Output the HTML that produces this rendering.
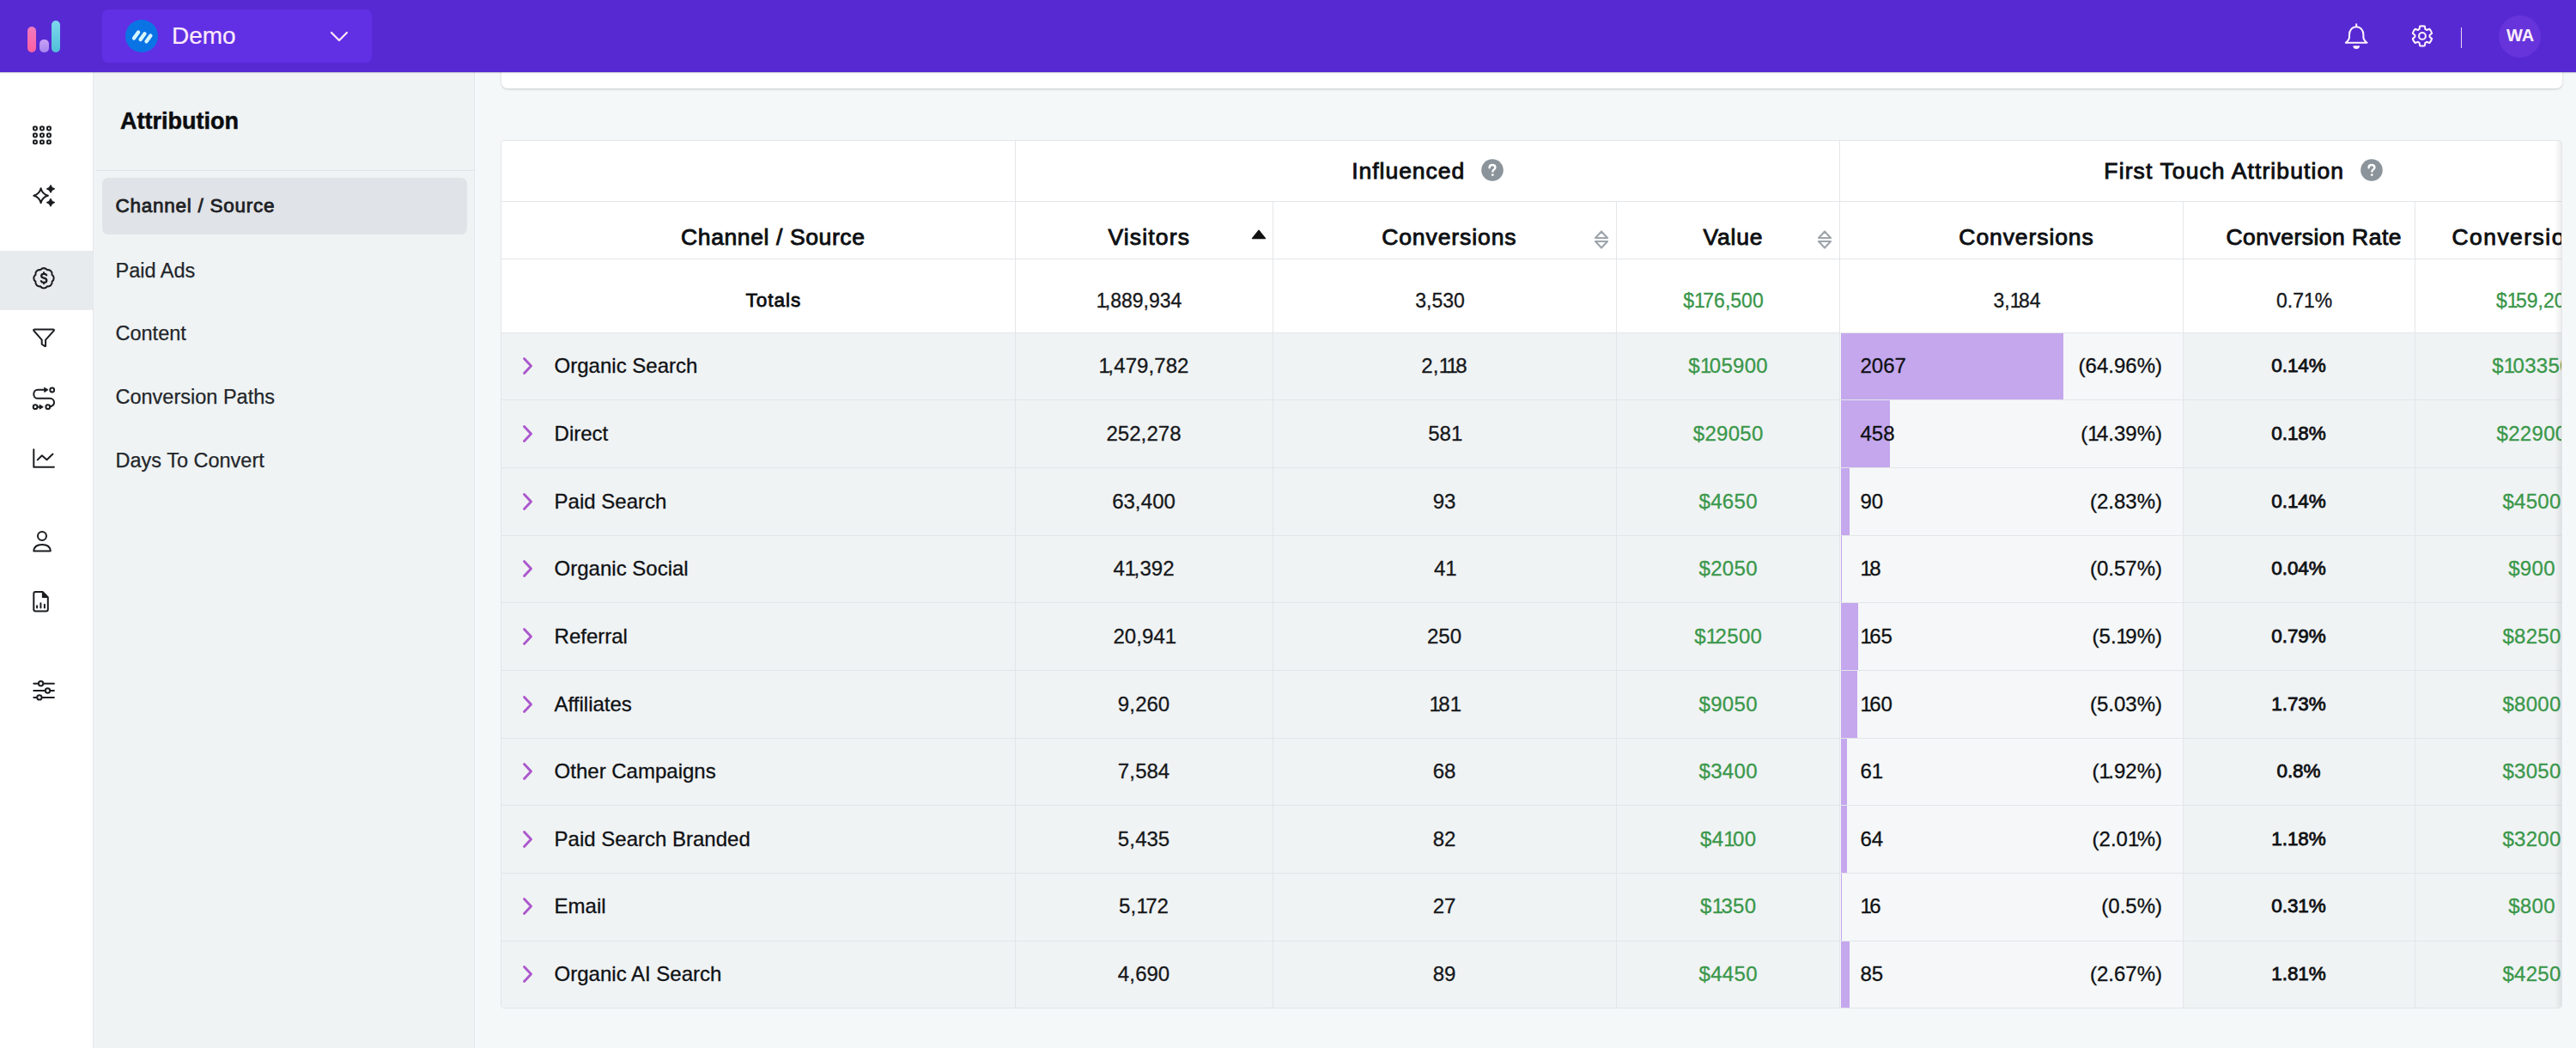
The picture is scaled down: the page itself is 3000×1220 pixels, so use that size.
<!DOCTYPE html><html><head><meta charset="utf-8"><title>Attribution</title><style>
*{box-sizing:border-box;margin:0;padding:0}
html,body{width:3000px;height:1220px;overflow:hidden}
body{position:relative;font-family:"Liberation Sans",sans-serif;color:#101214;background:#f5f8f9}
.a{position:absolute}
.t{position:absolute;white-space:nowrap;line-height:1}
.rg{-webkit-text-stroke:0.3px currentColor}
#hdr{left:0;top:0;width:3000px;height:84px;background:#5729d3;z-index:5;box-shadow:0 1px 1px rgba(30,10,60,.18)}
#side{left:0;top:84px;width:109px;height:1136px;background:#fff;border-right:1px solid #e6e8eb}
#panel{left:109px;top:84px;width:444px;height:1136px;background:#eff3f4;border-right:1px solid #e4e7ea}
#topcard{left:584px;top:40px;width:2400px;height:63px;background:#fff;border-radius:7px;box-shadow:0 1px 3px rgba(0,0,0,.12),0 1px 2px rgba(0,0,0,.08)}
#tcard{left:583px;top:163px;width:2401px;height:1011px;background:#fff;border:1px solid #e3e6e9;border-radius:4px;overflow:hidden}
.hl{border-top:1px solid #e3e6e9}
.vl{border-left:1px solid #e3e6e9}
.th{font-weight:bold;font-size:26px}
.num{font-size:23px}
.g{color:#3b984b}
</style></head><body>
<div id="hdr" class="a">
<div class="a" style="left:32px;top:31px;width:10px;height:30px;border-radius:5px;background:linear-gradient(#f07ac0,#ff5fa0)"></div>
<div class="a" style="left:46px;top:46px;width:10.5px;height:15px;border-radius:5px;background:linear-gradient(#c9a0f5,#a586ef)"></div>
<div class="a" style="left:60px;top:23.5px;width:10px;height:37.5px;border-radius:5px;background:linear-gradient(#7fd6ee,#4fc0d8)"></div>
<div class="a" style="left:119px;top:11px;width:314px;height:62px;border-radius:7px;background:#6130e4"></div>
<div class="a" style="left:146px;top:22.5px;width:38px;height:38px;border-radius:50%;background:#0b74e5"></div>
<svg class="a" style="left:146px;top:22.5px" width="38" height="38" viewBox="0 0 38 38"><g stroke="#d6f5ff" stroke-width="4.3" stroke-linecap="round"><line x1="10" y1="21.5" x2="15.1" y2="14.5"/><line x1="17.6" y1="23.1" x2="22.5" y2="16.3"/><line x1="24.5" y1="25.2" x2="29.4" y2="18.4"/></g></svg>
<div class="t" style="left:200px;top:27.5px;font-size:28px;color:#fdeafa;-webkit-text-stroke:0.2px #fdeafa">Demo</div>
<svg class="a" style="left:384px;top:35px" width="22" height="14" viewBox="0 0 22 14"><polyline points="2,3 11,12 20,3" fill="none" stroke="#fde8f8" stroke-width="2.2" stroke-linecap="round" stroke-linejoin="round"/></svg>
<svg class="a" style="left:0;top:0" width="3000" height="84" viewBox="0 0 3000 84"><path d="M2744.2 28.3 V31.3 M2744.2 31.3 C2739.3 31.3 2736 35.2 2736 40.6 V43.2 C2736 45.6 2734 47.9 2731.9 49.8 H2756.5 C2754.4 47.9 2752.4 45.6 2752.4 43.2 V40.6 C2752.4 35.2 2749.1 31.3 2744.2 31.3Z" fill="none" stroke="#fdf0fb" stroke-width="2.1" stroke-linecap="round" stroke-linejoin="round"/><path d="M2740.3 53.2 H2748.1 A3.9 3.7 0 0 1 2740.3 53.2Z" fill="#fdf0fb"/></svg>
<svg class="a" style="left:0;top:0" width="3000" height="84" viewBox="0 0 3000 84"><path d="M2817.50 34.04 L2818.19 30.64 A11.60 11.60 0 0 1 2823.81 30.64 L2824.50 34.04 A8.60 8.60 0 0 1 2826.05 34.94 L2829.34 33.84 A11.60 11.60 0 0 1 2832.15 38.70 L2829.55 41.00 A8.60 8.60 0 0 1 2829.55 42.80 L2832.15 45.10 A11.60 11.60 0 0 1 2829.34 49.96 L2826.05 48.86 A8.60 8.60 0 0 1 2824.50 49.76 L2823.81 53.16 A11.60 11.60 0 0 1 2818.19 53.16 L2817.50 49.76 A8.60 8.60 0 0 1 2815.95 48.86 L2812.66 49.96 A11.60 11.60 0 0 1 2809.85 45.10 L2812.45 42.80 A8.60 8.60 0 0 1 2812.45 41.00 L2809.85 38.70 A11.60 11.60 0 0 1 2812.66 33.84 L2815.95 34.94 A8.60 8.60 0 0 1 2817.50 34.04Z" fill="none" stroke="#fdf0fb" stroke-width="2.1" stroke-linejoin="round"/><circle cx="2821" cy="41.9" r="3.9" fill="none" stroke="#fdf0fb" stroke-width="2.1"/></svg>
<div class="a" style="left:2865.5px;top:32px;width:1.5px;height:24px;background:#e8d8f5"></div>
<div class="a" style="left:2909.7px;top:17.5px;width:49px;height:49px;border-radius:50%;background:#6634da"></div>
<div class="t" style="left:2919px;top:31px;font-size:20px;font-weight:bold;color:#fdeefa;width:32px;text-align:center">WA</div>
</div>
<div id="side" class="a">
<div class="a" style="left:0;top:208px;width:108px;height:69px;background:#e8ebee"></div>
</div>
<svg class="a" style="left:0;top:0;z-index:2" width="109" height="1220" viewBox="0 0 109 1220"><rect x="39.0" y="147.5" width="3.9" height="3.9" rx="1.1" fill="none" stroke="#1b1d20" stroke-width="2" stroke-linecap="round" stroke-linejoin="round"/><rect x="39.0" y="155.5" width="3.9" height="3.9" rx="1.1" fill="none" stroke="#1b1d20" stroke-width="2" stroke-linecap="round" stroke-linejoin="round"/><rect x="39.0" y="163.4" width="3.9" height="3.9" rx="1.1" fill="none" stroke="#1b1d20" stroke-width="2" stroke-linecap="round" stroke-linejoin="round"/><rect x="47.0" y="147.5" width="3.9" height="3.9" rx="1.1" fill="none" stroke="#1b1d20" stroke-width="2" stroke-linecap="round" stroke-linejoin="round"/><rect x="47.0" y="155.5" width="3.9" height="3.9" rx="1.1" fill="none" stroke="#1b1d20" stroke-width="2" stroke-linecap="round" stroke-linejoin="round"/><rect x="47.0" y="163.4" width="3.9" height="3.9" rx="1.1" fill="none" stroke="#1b1d20" stroke-width="2" stroke-linecap="round" stroke-linejoin="round"/><rect x="55.0" y="147.5" width="3.9" height="3.9" rx="1.1" fill="none" stroke="#1b1d20" stroke-width="2" stroke-linecap="round" stroke-linejoin="round"/><rect x="55.0" y="155.5" width="3.9" height="3.9" rx="1.1" fill="none" stroke="#1b1d20" stroke-width="2" stroke-linecap="round" stroke-linejoin="round"/><rect x="55.0" y="163.4" width="3.9" height="3.9" rx="1.1" fill="none" stroke="#1b1d20" stroke-width="2" stroke-linecap="round" stroke-linejoin="round"/><path d="M47.6 219.2 Q49.3 226 55.9 227.7 Q49.3 229.4 47.6 236.2 Q45.9 229.4 39.3 227.7 Q45.9 226 47.6 219.2Z" fill="none" stroke="#1b1d20" stroke-width="2" stroke-linecap="round" stroke-linejoin="round"/><path d="M59 215.6 Q59.9 219.0 63.4 219.9 Q59.9 220.8 59 224.2 Q58.1 220.8 54.6 219.9 Q58.1 219.0 59 215.6Z" fill="#1b1d20" stroke="#1b1d20" stroke-width="1.2" stroke-linejoin="round"/><path d="M59 231.4 Q59.9 234.8 63.4 235.7 Q59.9 236.6 59 240.0 Q58.1 236.6 54.6 235.7 Q58.1 234.8 59 231.4Z" fill="#1b1d20" stroke="#1b1d20" stroke-width="1.2" stroke-linejoin="round"/><g transform="translate(51 323.8) scale(1.17) translate(-12 -12)"><path d="M3.85 8.62a4 4 0 0 1 4.78-4.77 4 4 0 0 1 6.74 0 4 4 0 0 1 4.78 4.78 4 4 0 0 1 0 6.74 4 4 0 0 1-4.77 4.78 4 4 0 0 1-6.75 0 4 4 0 0 1-4.78-4.77 4 4 0 0 1 0-6.76Z" fill="none" stroke="#1b1d20" stroke-width="1.75" stroke-linejoin="round"/></g><path d="M54.2 320.3 C53.7 319.2 52.6 318.9 51.2 318.9 C49.4 318.9 48.2 319.9 48.2 321.2 C48.2 322.7 49.6 323.3 51.2 323.7 C52.9 324.1 54.3 324.8 54.3 326.4 C54.3 327.8 53 328.8 51.1 328.8 C49.6 328.8 48.4 328.3 47.9 327.2 M51.1 317.4 V318.9 M51.1 328.8 V330.2" fill="none" stroke="#1b1d20" stroke-width="2.3" stroke-linecap="round" stroke-linejoin="round"/><path d="M40.3 383.5 H61.8 Q63.6 383.5 62.6 385.1 L53.1 395.7 V402.5 Q53.1 403.6 52.1 403 L48.7 400.6 V395.7 L39.5 385.1 Q38.5 383.5 40.3 383.5Z" fill="none" stroke="#1b1d20" stroke-width="2" stroke-linecap="round" stroke-linejoin="round"/><circle cx="60.7" cy="454" r="2.4" fill="none" stroke="#1b1d20" stroke-width="2" stroke-linecap="round" stroke-linejoin="round"/><circle cx="41.1" cy="473.7" r="2.4" fill="none" stroke="#1b1d20" stroke-width="2" stroke-linecap="round" stroke-linejoin="round"/><circle cx="55.8" cy="473.7" r="2.4" fill="none" stroke="#1b1d20" stroke-width="2" stroke-linecap="round" stroke-linejoin="round"/><path d="M53 453.8 H44 C41.2 453.8 39.3 456 39.3 458.9 C39.3 461.8 41.3 463.8 44 463.8 H58.2 C61 463.8 63 466 63 468.6 C63 471 61.2 472.8 58.3 473.5" fill="none" stroke="#1b1d20" stroke-width="2" stroke-linecap="round" stroke-linejoin="round"/><path d="M51.8 451.4 L55.6 453.8 L51.8 456.2Z" fill="#1b1d20" stroke="#1b1d20" stroke-width="1.2" stroke-linejoin="round"/><path d="M44.5 473.7 H47" fill="none" stroke="#1b1d20" stroke-width="2" stroke-linecap="round" stroke-linejoin="round"/><path d="M46.3 471.4 L50 473.7 L46.3 476Z" fill="#1b1d20" stroke="#1b1d20" stroke-width="1.1" stroke-linejoin="round"/><path d="M39.3 523.3 V543.8 H62.9 M43.7 535.4 L48.9 530.2 L54.5 535.2 L61.5 528.6" fill="none" stroke="#1b1d20" stroke-width="2" stroke-linecap="round" stroke-linejoin="round"/><circle cx="49" cy="624" r="5" fill="none" stroke="#1b1d20" stroke-width="2" stroke-linecap="round" stroke-linejoin="round"/><path d="M39.3 641.4 C39.6 636.3 43.6 633.9 49 633.9 C54.4 633.9 58.5 636.3 58.8 641.4Z" fill="none" stroke="#1b1d20" stroke-width="2" stroke-linecap="round" stroke-linejoin="round"/><path d="M41.3 688.9 H49.6 L55.8 695.2 V709.5 Q55.8 711.5 53.8 711.5 H41.3 Q39.3 711.5 39.3 709.5 V690.9 Q39.3 688.9 41.3 688.9Z" fill="none" stroke="#1b1d20" stroke-width="2" stroke-linecap="round" stroke-linejoin="round"/><path d="M49.6 689.5 V695.2 H55.3Z" fill="#1b1d20" stroke="#1b1d20" stroke-width="1.5" stroke-linejoin="round"/><path d="M43.1 705.3 V707.6 M47.4 702.3 V707.6 M51.9 703.7 V707.6" fill="none" stroke="#1b1d20" stroke-width="2" stroke-linecap="round" stroke-linejoin="round"/><path d="M39.3 795.8 H44 M51.2 795.8 H62.9 M39.3 804 H51.9 M59.1 804 H62.9 M39.3 811.9 H42.3 M49.5 811.9 H62.9" fill="none" stroke="#1b1d20" stroke-width="2" stroke-linecap="round" stroke-linejoin="round"/><circle cx="47.6" cy="795.8" r="2.7" fill="none" stroke="#1b1d20" stroke-width="2" stroke-linecap="round" stroke-linejoin="round"/><circle cx="55.5" cy="804" r="2.7" fill="none" stroke="#1b1d20" stroke-width="2" stroke-linecap="round" stroke-linejoin="round"/><circle cx="45.9" cy="811.9" r="2.7" fill="none" stroke="#1b1d20" stroke-width="2" stroke-linecap="round" stroke-linejoin="round"/></svg>
<div id="panel" class="a">
<div class="t" style="left:31px;top:44.3px;font-size:27px;font-weight:bold;color:#0c0d0f;-webkit-text-stroke:0.5px #0c0d0f">Attribution</div>
<div class="a" style="left:3px;top:113.5px;width:441px;height:1px;background:#e1e4e7"></div>
<div class="a" style="left:9.5px;top:123px;width:425px;height:65.5px;border-radius:7px;background:#e0e3e7"></div>
<div class="t" style="left:25.5px;top:145.3px;font-size:22.5px;color:#1d2024;-webkit-text-stroke:0.8px #1d2024;letter-spacing:0.75px">Channel / Source</div>
<div class="t" style="left:25.5px;top:219.5px;font-size:23.5px;color:#23262a;-webkit-text-stroke:0.25px #23262a">Paid Ads</div>
<div class="t" style="left:25.5px;top:293.4px;font-size:23.5px;color:#23262a;-webkit-text-stroke:0.25px #23262a">Content</div>
<div class="t" style="left:25.5px;top:367.3px;font-size:23.5px;color:#23262a;-webkit-text-stroke:0.25px #23262a">Conversion Paths</div>
<div class="t" style="left:25.5px;top:441.20000000000005px;font-size:23.5px;color:#23262a;-webkit-text-stroke:0.25px #23262a">Days To Convert</div>
</div>
<div id="topcard" class="a"></div>
<div id="tcard" class="a">
<div class="a" style="left:0;top:223.00px;width:2400px;height:78.00px;background:#f0f3f4"></div>
<div class="a" style="left:1558px;top:223.00px;width:400px;height:78.00px;background:#f5f7f8"></div>
<div class="a" style="left:1560px;top:223.00px;width:258.84px;height:78.00px;background:#c4a7ed"></div>
<div class="a" style="left:0;top:301.00px;width:2400px;height:79.00px;background:#f0f3f4"></div>
<div class="a" style="left:1558px;top:301.00px;width:400px;height:79.00px;background:#f5f7f8"></div>
<div class="a" style="left:1560px;top:301.00px;width:56.56px;height:79.00px;background:#c4a7ed"></div>
<div class="a" style="left:0;top:380.00px;width:2400px;height:79.00px;background:#f0f3f4"></div>
<div class="a" style="left:1558px;top:380.00px;width:400px;height:79.00px;background:#f5f7f8"></div>
<div class="a" style="left:1560px;top:380.00px;width:10.32px;height:79.00px;background:#c4a7ed"></div>
<div class="a" style="left:0;top:459.00px;width:2400px;height:78.00px;background:#f0f3f4"></div>
<div class="a" style="left:1558px;top:459.00px;width:400px;height:78.00px;background:#f5f7f8"></div>
<div class="a" style="left:1560px;top:459.00px;width:1.28px;height:78.00px;background:#c4a7ed"></div>
<div class="a" style="left:0;top:537.00px;width:2400px;height:79.00px;background:#f0f3f4"></div>
<div class="a" style="left:1558px;top:537.00px;width:400px;height:79.00px;background:#f5f7f8"></div>
<div class="a" style="left:1560px;top:537.00px;width:19.76px;height:79.00px;background:#c4a7ed"></div>
<div class="a" style="left:0;top:616.00px;width:2400px;height:79.00px;background:#f0f3f4"></div>
<div class="a" style="left:1558px;top:616.00px;width:400px;height:79.00px;background:#f5f7f8"></div>
<div class="a" style="left:1560px;top:616.00px;width:19.12px;height:79.00px;background:#c4a7ed"></div>
<div class="a" style="left:0;top:695.00px;width:2400px;height:78.00px;background:#f0f3f4"></div>
<div class="a" style="left:1558px;top:695.00px;width:400px;height:78.00px;background:#f5f7f8"></div>
<div class="a" style="left:1560px;top:695.00px;width:6.68px;height:78.00px;background:#c4a7ed"></div>
<div class="a" style="left:0;top:773.00px;width:2400px;height:79.00px;background:#f0f3f4"></div>
<div class="a" style="left:1558px;top:773.00px;width:400px;height:79.00px;background:#f5f7f8"></div>
<div class="a" style="left:1560px;top:773.00px;width:7.04px;height:79.00px;background:#c4a7ed"></div>
<div class="a" style="left:0;top:852.00px;width:2400px;height:78.50px;background:#f0f3f4"></div>
<div class="a" style="left:1558px;top:852.00px;width:400px;height:78.50px;background:#f5f7f8"></div>
<div class="a" style="left:1560px;top:852.00px;width:1.00px;height:78.50px;background:#c4a7ed"></div>
<div class="a" style="left:0;top:930.50px;width:2400px;height:78.50px;background:#f0f3f4"></div>
<div class="a" style="left:1558px;top:930.50px;width:400px;height:78.50px;background:#f5f7f8"></div>
<div class="a" style="left:1560px;top:930.50px;width:9.68px;height:78.50px;background:#c4a7ed"></div>
<div class="a" style="left:0;top:70.00px;width:2400px;height:1px;background:#e3e6e9"></div>
<div class="a" style="left:0;top:136.60px;width:2400px;height:1px;background:#e3e6e9"></div>
<div class="a" style="left:0;top:223.00px;width:2400px;height:1px;background:#e3e6e9"></div>
<div class="a" style="left:0;top:301.00px;width:2400px;height:1px;background:#e3e6e9"></div>
<div class="a" style="left:0;top:380.00px;width:2400px;height:1px;background:#e3e6e9"></div>
<div class="a" style="left:0;top:459.00px;width:2400px;height:1px;background:#e3e6e9"></div>
<div class="a" style="left:0;top:537.00px;width:2400px;height:1px;background:#e3e6e9"></div>
<div class="a" style="left:0;top:616.00px;width:2400px;height:1px;background:#e3e6e9"></div>
<div class="a" style="left:0;top:695.00px;width:2400px;height:1px;background:#e3e6e9"></div>
<div class="a" style="left:0;top:773.00px;width:2400px;height:1px;background:#e3e6e9"></div>
<div class="a" style="left:0;top:852.00px;width:2400px;height:1px;background:#e3e6e9"></div>
<div class="a" style="left:0;top:930.50px;width:2400px;height:1px;background:#e3e6e9"></div>
<div class="a" style="left:598px;top:0;width:1px;height:1010px;background:#e3e6e9"></div>
<div class="a" style="left:1558px;top:0;width:1px;height:1010px;background:#e3e6e9"></div>
<div class="a" style="left:898px;top:70px;width:1px;height:1010px;background:#e3e6e9"></div>
<div class="a" style="left:1298px;top:70px;width:1px;height:1010px;background:#e3e6e9"></div>
<div class="a" style="left:1958px;top:70px;width:1px;height:1010px;background:#e3e6e9"></div>
<div class="a" style="left:2228px;top:70px;width:1px;height:1010px;background:#e3e6e9"></div>
<div class="t" style="left:1056.2px;top:22.0px;width:0;font-size:26.5px;font-weight:normal;color:#0d0f12;-webkit-text-stroke:0.90px #0d0f12;letter-spacing:0.98px;"><span style="position:absolute;left:0;transform:translateX(-50%)">Influenced</span></div>
<div class="t" style="left:2006.3px;top:22.0px;width:0;font-size:26.5px;font-weight:normal;color:#0d0f12;-webkit-text-stroke:0.90px #0d0f12;letter-spacing:1.11px;"><span style="position:absolute;left:0;transform:translateX(-50%)">First Touch Attribution</span></div>
<svg class="a" style="left:1141px;top:21px" width="26" height="26" viewBox="0 0 26 26"><circle cx="13" cy="13" r="12.8" fill="#8b949b"/><path d="M9.6 10.2c0-1.9 1.5-3.2 3.4-3.2s3.4 1.2 3.4 3c0 2.3-3 2.5-3 4.6" fill="none" stroke="#fff" stroke-width="2.4" stroke-linecap="round"/><circle cx="13.3" cy="18.6" r="1.4" fill="#fff"/></svg>
<svg class="a" style="left:2164.5px;top:21px" width="26" height="26" viewBox="0 0 26 26"><circle cx="13" cy="13" r="12.8" fill="#8b949b"/><path d="M9.6 10.2c0-1.9 1.5-3.2 3.4-3.2s3.4 1.2 3.4 3c0 2.3-3 2.5-3 4.6" fill="none" stroke="#fff" stroke-width="2.4" stroke-linecap="round"/><circle cx="13.3" cy="18.6" r="1.4" fill="#fff"/></svg>
<div class="t" style="left:316.3px;top:99.0px;width:0;font-size:26.5px;font-weight:normal;color:#0d0f12;-webkit-text-stroke:0.90px #0d0f12;letter-spacing:0.61px;"><span style="position:absolute;left:0;transform:translateX(-50%)">Channel / Source</span></div>
<div class="t" style="left:754.3px;top:99.0px;width:0;font-size:26.5px;font-weight:normal;color:#0d0f12;-webkit-text-stroke:0.90px #0d0f12;letter-spacing:1.16px;"><span style="position:absolute;left:0;transform:translateX(-50%)">Visitors</span></div>
<div class="t" style="left:1103.8px;top:99.0px;width:0;font-size:26.5px;font-weight:normal;color:#0d0f12;-webkit-text-stroke:0.90px #0d0f12;letter-spacing:0.91px;"><span style="position:absolute;left:0;transform:translateX(-50%)">Conversions</span></div>
<div class="t" style="left:1434.4px;top:99.0px;width:0;font-size:26.5px;font-weight:normal;color:#0d0f12;-webkit-text-stroke:0.90px #0d0f12;letter-spacing:0.83px;"><span style="position:absolute;left:0;transform:translateX(-50%)">Value</span></div>
<div class="t" style="left:1776.0px;top:99.0px;width:0;font-size:26.5px;font-weight:normal;color:#0d0f12;-webkit-text-stroke:0.90px #0d0f12;letter-spacing:0.91px;"><span style="position:absolute;left:0;transform:translateX(-50%)">Conversions</span></div>
<div class="t" style="left:2110.7px;top:99.0px;width:0;font-size:26.5px;font-weight:normal;color:#0d0f12;-webkit-text-stroke:0.90px #0d0f12;letter-spacing:0.48px;"><span style="position:absolute;left:0;transform:translateX(-50%)">Conversion Rate</span></div>
<div class="t" style="left:2271.4px;top:99.0px;font-size:26.5px;font-weight:normal;color:#0d0f12;-webkit-text-stroke:0.90px #0d0f12;letter-spacing:1.46px;">Conversion Value</div>
<svg class="a" style="left:872.5px;top:103px" width="18" height="12" viewBox="0 0 18 12"><path d="M9 1.2 L16.6 10.6 H1.4z" fill="#111" stroke="#111" stroke-width="1.2" stroke-linejoin="round"/></svg>
<svg class="a" style="left:1272px;top:104px" width="18" height="22" viewBox="0 0 18 22"><path d="M9 1.5 L16 9 H2z M2 13 H16 L9 20.5z" fill="none" stroke="#9ea5ab" stroke-width="2.2" stroke-linejoin="round"/></svg>
<svg class="a" style="left:1532px;top:104px" width="18" height="22" viewBox="0 0 18 22"><path d="M9 1.5 L16 9 H2z M2 13 H16 L9 20.5z" fill="none" stroke="#9ea5ab" stroke-width="2.2" stroke-linejoin="round"/></svg>
<div class="t" style="left:316.8px;top:175.0px;width:0;font-size:22.5px;font-weight:normal;color:#0d0f12;-webkit-text-stroke:0.80px #0d0f12;letter-spacing:1.00px;"><span style="position:absolute;left:0;transform:translateX(-50%)">Totals</span></div>
<div class="t" style="left:742.5px;top:175.0px;width:0;font-size:23px;font-weight:normal;color:#16181b;-webkit-text-stroke:0.3px #16181b;"><span style="position:absolute;left:0;transform:translateX(-50%)"><span style="letter-spacing:-2.6px">1</span><span style="letter-spacing:0px">,</span>889<span style="letter-spacing:0px">,</span>934</span></div>
<div class="t" style="left:1093.0px;top:175.0px;width:0;font-size:23px;font-weight:normal;color:#16181b;-webkit-text-stroke:0.3px #16181b;"><span style="position:absolute;left:0;transform:translateX(-50%)">3<span style="letter-spacing:0px">,</span>530</span></div>
<div class="t" style="left:1423.0px;top:175.0px;width:0;font-size:23px;font-weight:normal;color:#3a964a;-webkit-text-stroke:0.3px #3a964a;"><span style="position:absolute;left:0;transform:translateX(-50%)">$<span style="letter-spacing:-2.6px">1</span>76<span style="letter-spacing:0px">,</span>500</span></div>
<div class="t" style="left:1765.0px;top:175.0px;width:0;font-size:23px;font-weight:normal;color:#16181b;-webkit-text-stroke:0.3px #16181b;"><span style="position:absolute;left:0;transform:translateX(-50%)">3<span style="letter-spacing:0px">,</span><span style="letter-spacing:-2.6px">1</span>84</span></div>
<div class="t" style="left:2099.6px;top:175.0px;width:0;font-size:23px;font-weight:normal;color:#16181b;-webkit-text-stroke:0.3px #16181b;"><span style="position:absolute;left:0;transform:translateX(-50%)">0.71%</span></div>
<div class="t" style="left:2369.7px;top:175.0px;width:0;font-size:23px;font-weight:normal;color:#3a964a;-webkit-text-stroke:0.3px #3a964a;"><span style="position:absolute;left:0;transform:translateX(-50%)">$<span style="letter-spacing:-2.6px">1</span>59<span style="letter-spacing:0px">,</span>200</span></div>
<svg class="a" style="left:22.5px;top:251.0px" width="16" height="22" viewBox="0 0 16 22"><polyline points="3.5,2.5 11.5,11 3.5,19.5" fill="none" stroke="#ab58cc" stroke-width="2.9" stroke-linecap="round" stroke-linejoin="round"/></svg>
<div class="t" style="left:61.6px;top:250.0px;font-size:24px;font-weight:normal;color:#0f1114;-webkit-text-stroke:0.3px #0f1114;">Organic Search</div>
<div class="t" style="left:748.0px;top:250.0px;width:0;font-size:24px;font-weight:normal;color:#16181b;-webkit-text-stroke:0.3px #16181b;"><span style="position:absolute;left:0;transform:translateX(-50%)"><span style="letter-spacing:-2.6px">1</span><span style="letter-spacing:0.3px">,</span>479<span style="letter-spacing:0.3px">,</span>782</span></div>
<div class="t" style="left:1098.0px;top:250.0px;width:0;font-size:24px;font-weight:normal;color:#16181b;-webkit-text-stroke:0.3px #16181b;"><span style="position:absolute;left:0;transform:translateX(-50%)">2<span style="letter-spacing:0.3px">,</span><span style="letter-spacing:-2.6px">1</span><span style="letter-spacing:-2.6px">1</span>8</span></div>
<div class="t" style="left:1428.7px;top:250.0px;width:0;font-size:24px;font-weight:normal;color:#3b984b;letter-spacing:0.3px;-webkit-text-stroke:0.3px #3b984b;"><span style="position:absolute;left:0;transform:translateX(-50%)">$<span style="letter-spacing:-2.6px">1</span>05900</span></div>
<div class="t" style="left:1582.5px;top:250.0px;font-size:24px;font-weight:normal;color:#0f1114;-webkit-text-stroke:0.3px #0f1114;">2067</div>
<div class="t" style="left:1934.0px;top:250.0px;width:0;font-size:24px;font-weight:normal;color:#0f1114;-webkit-text-stroke:0.3px #0f1114;"><span style="position:absolute;right:0">(64.96%)</span></div>
<div class="t" style="left:2093.0px;top:251.0px;width:0;font-size:22.5px;font-weight:normal;color:#0f1114;-webkit-text-stroke:0.80px #0f1114;letter-spacing:-0.07px;"><span style="position:absolute;left:0;transform:translateX(-50%)">0.14%</span></div>
<div class="t" style="left:2364.5px;top:250.0px;width:0;font-size:24px;font-weight:normal;color:#3b984b;letter-spacing:0.3px;-webkit-text-stroke:0.3px #3b984b;"><span style="position:absolute;left:0;transform:translateX(-50%)">$<span style="letter-spacing:-2.6px">1</span>03350</span></div>
<svg class="a" style="left:22.5px;top:329.5px" width="16" height="22" viewBox="0 0 16 22"><polyline points="3.5,2.5 11.5,11 3.5,19.5" fill="none" stroke="#ab58cc" stroke-width="2.9" stroke-linecap="round" stroke-linejoin="round"/></svg>
<div class="t" style="left:61.6px;top:328.5px;font-size:24px;font-weight:normal;color:#0f1114;-webkit-text-stroke:0.3px #0f1114;">Direct</div>
<div class="t" style="left:748.0px;top:328.5px;width:0;font-size:24px;font-weight:normal;color:#16181b;-webkit-text-stroke:0.3px #16181b;"><span style="position:absolute;left:0;transform:translateX(-50%)">252<span style="letter-spacing:0.3px">,</span>278</span></div>
<div class="t" style="left:1098.0px;top:328.5px;width:0;font-size:24px;font-weight:normal;color:#16181b;-webkit-text-stroke:0.3px #16181b;"><span style="position:absolute;left:0;transform:translateX(-50%)">58<span style="letter-spacing:-2.6px">1</span></span></div>
<div class="t" style="left:1428.7px;top:328.5px;width:0;font-size:24px;font-weight:normal;color:#3b984b;letter-spacing:0.3px;-webkit-text-stroke:0.3px #3b984b;"><span style="position:absolute;left:0;transform:translateX(-50%)">$29050</span></div>
<div class="t" style="left:1582.5px;top:328.5px;font-size:24px;font-weight:normal;color:#0f1114;-webkit-text-stroke:0.3px #0f1114;">458</div>
<div class="t" style="left:1934.0px;top:328.5px;width:0;font-size:24px;font-weight:normal;color:#0f1114;-webkit-text-stroke:0.3px #0f1114;"><span style="position:absolute;right:0">(<span style="letter-spacing:-2.6px">1</span>4.39%)</span></div>
<div class="t" style="left:2093.0px;top:329.5px;width:0;font-size:22.5px;font-weight:normal;color:#0f1114;-webkit-text-stroke:0.80px #0f1114;letter-spacing:-0.07px;"><span style="position:absolute;left:0;transform:translateX(-50%)">0.18%</span></div>
<div class="t" style="left:2364.5px;top:328.5px;width:0;font-size:24px;font-weight:normal;color:#3b984b;letter-spacing:0.3px;-webkit-text-stroke:0.3px #3b984b;"><span style="position:absolute;left:0;transform:translateX(-50%)">$22900</span></div>
<svg class="a" style="left:22.5px;top:408.5px" width="16" height="22" viewBox="0 0 16 22"><polyline points="3.5,2.5 11.5,11 3.5,19.5" fill="none" stroke="#ab58cc" stroke-width="2.9" stroke-linecap="round" stroke-linejoin="round"/></svg>
<div class="t" style="left:61.6px;top:407.5px;font-size:24px;font-weight:normal;color:#0f1114;-webkit-text-stroke:0.3px #0f1114;">Paid Search</div>
<div class="t" style="left:748.0px;top:407.5px;width:0;font-size:24px;font-weight:normal;color:#16181b;-webkit-text-stroke:0.3px #16181b;"><span style="position:absolute;left:0;transform:translateX(-50%)">63<span style="letter-spacing:0.3px">,</span>400</span></div>
<div class="t" style="left:1098.0px;top:407.5px;width:0;font-size:24px;font-weight:normal;color:#16181b;-webkit-text-stroke:0.3px #16181b;"><span style="position:absolute;left:0;transform:translateX(-50%)">93</span></div>
<div class="t" style="left:1428.7px;top:407.5px;width:0;font-size:24px;font-weight:normal;color:#3b984b;letter-spacing:0.3px;-webkit-text-stroke:0.3px #3b984b;"><span style="position:absolute;left:0;transform:translateX(-50%)">$4650</span></div>
<div class="t" style="left:1582.5px;top:407.5px;font-size:24px;font-weight:normal;color:#0f1114;-webkit-text-stroke:0.3px #0f1114;">90</div>
<div class="t" style="left:1934.0px;top:407.5px;width:0;font-size:24px;font-weight:normal;color:#0f1114;-webkit-text-stroke:0.3px #0f1114;"><span style="position:absolute;right:0">(2.83%)</span></div>
<div class="t" style="left:2093.0px;top:408.5px;width:0;font-size:22.5px;font-weight:normal;color:#0f1114;-webkit-text-stroke:0.80px #0f1114;letter-spacing:-0.07px;"><span style="position:absolute;left:0;transform:translateX(-50%)">0.14%</span></div>
<div class="t" style="left:2364.5px;top:407.5px;width:0;font-size:24px;font-weight:normal;color:#3b984b;letter-spacing:0.3px;-webkit-text-stroke:0.3px #3b984b;"><span style="position:absolute;left:0;transform:translateX(-50%)">$4500</span></div>
<svg class="a" style="left:22.5px;top:487.0px" width="16" height="22" viewBox="0 0 16 22"><polyline points="3.5,2.5 11.5,11 3.5,19.5" fill="none" stroke="#ab58cc" stroke-width="2.9" stroke-linecap="round" stroke-linejoin="round"/></svg>
<div class="t" style="left:61.6px;top:486.0px;font-size:24px;font-weight:normal;color:#0f1114;-webkit-text-stroke:0.3px #0f1114;">Organic Social</div>
<div class="t" style="left:748.0px;top:486.0px;width:0;font-size:24px;font-weight:normal;color:#16181b;-webkit-text-stroke:0.3px #16181b;"><span style="position:absolute;left:0;transform:translateX(-50%)">4<span style="letter-spacing:-2.6px">1</span><span style="letter-spacing:0.3px">,</span>392</span></div>
<div class="t" style="left:1098.0px;top:486.0px;width:0;font-size:24px;font-weight:normal;color:#16181b;-webkit-text-stroke:0.3px #16181b;"><span style="position:absolute;left:0;transform:translateX(-50%)">4<span style="letter-spacing:-2.6px">1</span></span></div>
<div class="t" style="left:1428.7px;top:486.0px;width:0;font-size:24px;font-weight:normal;color:#3b984b;letter-spacing:0.3px;-webkit-text-stroke:0.3px #3b984b;"><span style="position:absolute;left:0;transform:translateX(-50%)">$2050</span></div>
<div class="t" style="left:1582.5px;top:486.0px;font-size:24px;font-weight:normal;color:#0f1114;-webkit-text-stroke:0.3px #0f1114;"><span style="letter-spacing:-2.6px">1</span>8</div>
<div class="t" style="left:1934.0px;top:486.0px;width:0;font-size:24px;font-weight:normal;color:#0f1114;-webkit-text-stroke:0.3px #0f1114;"><span style="position:absolute;right:0">(0.57%)</span></div>
<div class="t" style="left:2093.0px;top:487.0px;width:0;font-size:22.5px;font-weight:normal;color:#0f1114;-webkit-text-stroke:0.80px #0f1114;letter-spacing:-0.07px;"><span style="position:absolute;left:0;transform:translateX(-50%)">0.04%</span></div>
<div class="t" style="left:2364.5px;top:486.0px;width:0;font-size:24px;font-weight:normal;color:#3b984b;letter-spacing:0.3px;-webkit-text-stroke:0.3px #3b984b;"><span style="position:absolute;left:0;transform:translateX(-50%)">$900</span></div>
<svg class="a" style="left:22.5px;top:565.5px" width="16" height="22" viewBox="0 0 16 22"><polyline points="3.5,2.5 11.5,11 3.5,19.5" fill="none" stroke="#ab58cc" stroke-width="2.9" stroke-linecap="round" stroke-linejoin="round"/></svg>
<div class="t" style="left:61.6px;top:564.5px;font-size:24px;font-weight:normal;color:#0f1114;-webkit-text-stroke:0.3px #0f1114;">Referral</div>
<div class="t" style="left:748.0px;top:564.5px;width:0;font-size:24px;font-weight:normal;color:#16181b;-webkit-text-stroke:0.3px #16181b;"><span style="position:absolute;left:0;transform:translateX(-50%)">20<span style="letter-spacing:0.3px">,</span>94<span style="letter-spacing:-2.6px">1</span></span></div>
<div class="t" style="left:1098.0px;top:564.5px;width:0;font-size:24px;font-weight:normal;color:#16181b;-webkit-text-stroke:0.3px #16181b;"><span style="position:absolute;left:0;transform:translateX(-50%)">250</span></div>
<div class="t" style="left:1428.7px;top:564.5px;width:0;font-size:24px;font-weight:normal;color:#3b984b;letter-spacing:0.3px;-webkit-text-stroke:0.3px #3b984b;"><span style="position:absolute;left:0;transform:translateX(-50%)">$<span style="letter-spacing:-2.6px">1</span>2500</span></div>
<div class="t" style="left:1582.5px;top:564.5px;font-size:24px;font-weight:normal;color:#0f1114;-webkit-text-stroke:0.3px #0f1114;"><span style="letter-spacing:-2.6px">1</span>65</div>
<div class="t" style="left:1934.0px;top:564.5px;width:0;font-size:24px;font-weight:normal;color:#0f1114;-webkit-text-stroke:0.3px #0f1114;"><span style="position:absolute;right:0">(5.<span style="letter-spacing:-2.6px">1</span>9%)</span></div>
<div class="t" style="left:2093.0px;top:565.5px;width:0;font-size:22.5px;font-weight:normal;color:#0f1114;-webkit-text-stroke:0.80px #0f1114;letter-spacing:-0.07px;"><span style="position:absolute;left:0;transform:translateX(-50%)">0.79%</span></div>
<div class="t" style="left:2364.5px;top:564.5px;width:0;font-size:24px;font-weight:normal;color:#3b984b;letter-spacing:0.3px;-webkit-text-stroke:0.3px #3b984b;"><span style="position:absolute;left:0;transform:translateX(-50%)">$8250</span></div>
<svg class="a" style="left:22.5px;top:644.5px" width="16" height="22" viewBox="0 0 16 22"><polyline points="3.5,2.5 11.5,11 3.5,19.5" fill="none" stroke="#ab58cc" stroke-width="2.9" stroke-linecap="round" stroke-linejoin="round"/></svg>
<div class="t" style="left:61.6px;top:643.5px;font-size:24px;font-weight:normal;color:#0f1114;-webkit-text-stroke:0.3px #0f1114;">Affiliates</div>
<div class="t" style="left:748.0px;top:643.5px;width:0;font-size:24px;font-weight:normal;color:#16181b;-webkit-text-stroke:0.3px #16181b;"><span style="position:absolute;left:0;transform:translateX(-50%)">9<span style="letter-spacing:0.3px">,</span>260</span></div>
<div class="t" style="left:1098.0px;top:643.5px;width:0;font-size:24px;font-weight:normal;color:#16181b;-webkit-text-stroke:0.3px #16181b;"><span style="position:absolute;left:0;transform:translateX(-50%)"><span style="letter-spacing:-2.6px">1</span>8<span style="letter-spacing:-2.6px">1</span></span></div>
<div class="t" style="left:1428.7px;top:643.5px;width:0;font-size:24px;font-weight:normal;color:#3b984b;letter-spacing:0.3px;-webkit-text-stroke:0.3px #3b984b;"><span style="position:absolute;left:0;transform:translateX(-50%)">$9050</span></div>
<div class="t" style="left:1582.5px;top:643.5px;font-size:24px;font-weight:normal;color:#0f1114;-webkit-text-stroke:0.3px #0f1114;"><span style="letter-spacing:-2.6px">1</span>60</div>
<div class="t" style="left:1934.0px;top:643.5px;width:0;font-size:24px;font-weight:normal;color:#0f1114;-webkit-text-stroke:0.3px #0f1114;"><span style="position:absolute;right:0">(5.03%)</span></div>
<div class="t" style="left:2093.0px;top:644.5px;width:0;font-size:22.5px;font-weight:normal;color:#0f1114;-webkit-text-stroke:0.80px #0f1114;letter-spacing:-0.07px;"><span style="position:absolute;left:0;transform:translateX(-50%)">1.73%</span></div>
<div class="t" style="left:2364.5px;top:643.5px;width:0;font-size:24px;font-weight:normal;color:#3b984b;letter-spacing:0.3px;-webkit-text-stroke:0.3px #3b984b;"><span style="position:absolute;left:0;transform:translateX(-50%)">$8000</span></div>
<svg class="a" style="left:22.5px;top:723.0px" width="16" height="22" viewBox="0 0 16 22"><polyline points="3.5,2.5 11.5,11 3.5,19.5" fill="none" stroke="#ab58cc" stroke-width="2.9" stroke-linecap="round" stroke-linejoin="round"/></svg>
<div class="t" style="left:61.6px;top:722.0px;font-size:24px;font-weight:normal;color:#0f1114;-webkit-text-stroke:0.3px #0f1114;">Other Campaigns</div>
<div class="t" style="left:748.0px;top:722.0px;width:0;font-size:24px;font-weight:normal;color:#16181b;-webkit-text-stroke:0.3px #16181b;"><span style="position:absolute;left:0;transform:translateX(-50%)">7<span style="letter-spacing:0.3px">,</span>584</span></div>
<div class="t" style="left:1098.0px;top:722.0px;width:0;font-size:24px;font-weight:normal;color:#16181b;-webkit-text-stroke:0.3px #16181b;"><span style="position:absolute;left:0;transform:translateX(-50%)">68</span></div>
<div class="t" style="left:1428.7px;top:722.0px;width:0;font-size:24px;font-weight:normal;color:#3b984b;letter-spacing:0.3px;-webkit-text-stroke:0.3px #3b984b;"><span style="position:absolute;left:0;transform:translateX(-50%)">$3400</span></div>
<div class="t" style="left:1582.5px;top:722.0px;font-size:24px;font-weight:normal;color:#0f1114;-webkit-text-stroke:0.3px #0f1114;">6<span style="letter-spacing:-2.6px">1</span></div>
<div class="t" style="left:1934.0px;top:722.0px;width:0;font-size:24px;font-weight:normal;color:#0f1114;-webkit-text-stroke:0.3px #0f1114;"><span style="position:absolute;right:0">(<span style="letter-spacing:-2.6px">1</span>.92%)</span></div>
<div class="t" style="left:2092.9px;top:723.0px;width:0;font-size:22.5px;font-weight:normal;color:#0f1114;-webkit-text-stroke:0.80px #0f1114;letter-spacing:-0.13px;"><span style="position:absolute;left:0;transform:translateX(-50%)">0.8%</span></div>
<div class="t" style="left:2364.5px;top:722.0px;width:0;font-size:24px;font-weight:normal;color:#3b984b;letter-spacing:0.3px;-webkit-text-stroke:0.3px #3b984b;"><span style="position:absolute;left:0;transform:translateX(-50%)">$3050</span></div>
<svg class="a" style="left:22.5px;top:801.5px" width="16" height="22" viewBox="0 0 16 22"><polyline points="3.5,2.5 11.5,11 3.5,19.5" fill="none" stroke="#ab58cc" stroke-width="2.9" stroke-linecap="round" stroke-linejoin="round"/></svg>
<div class="t" style="left:61.6px;top:800.5px;font-size:24px;font-weight:normal;color:#0f1114;-webkit-text-stroke:0.3px #0f1114;">Paid Search Branded</div>
<div class="t" style="left:748.0px;top:800.5px;width:0;font-size:24px;font-weight:normal;color:#16181b;-webkit-text-stroke:0.3px #16181b;"><span style="position:absolute;left:0;transform:translateX(-50%)">5<span style="letter-spacing:0.3px">,</span>435</span></div>
<div class="t" style="left:1098.0px;top:800.5px;width:0;font-size:24px;font-weight:normal;color:#16181b;-webkit-text-stroke:0.3px #16181b;"><span style="position:absolute;left:0;transform:translateX(-50%)">82</span></div>
<div class="t" style="left:1428.7px;top:800.5px;width:0;font-size:24px;font-weight:normal;color:#3b984b;letter-spacing:0.3px;-webkit-text-stroke:0.3px #3b984b;"><span style="position:absolute;left:0;transform:translateX(-50%)">$4<span style="letter-spacing:-2.6px">1</span>00</span></div>
<div class="t" style="left:1582.5px;top:800.5px;font-size:24px;font-weight:normal;color:#0f1114;-webkit-text-stroke:0.3px #0f1114;">64</div>
<div class="t" style="left:1934.0px;top:800.5px;width:0;font-size:24px;font-weight:normal;color:#0f1114;-webkit-text-stroke:0.3px #0f1114;"><span style="position:absolute;right:0">(2.0<span style="letter-spacing:-2.6px">1</span>%)</span></div>
<div class="t" style="left:2093.0px;top:801.5px;width:0;font-size:22.5px;font-weight:normal;color:#0f1114;-webkit-text-stroke:0.80px #0f1114;letter-spacing:-0.07px;"><span style="position:absolute;left:0;transform:translateX(-50%)">1.18%</span></div>
<div class="t" style="left:2364.5px;top:800.5px;width:0;font-size:24px;font-weight:normal;color:#3b984b;letter-spacing:0.3px;-webkit-text-stroke:0.3px #3b984b;"><span style="position:absolute;left:0;transform:translateX(-50%)">$3200</span></div>
<svg class="a" style="left:22.5px;top:880.2px" width="16" height="22" viewBox="0 0 16 22"><polyline points="3.5,2.5 11.5,11 3.5,19.5" fill="none" stroke="#ab58cc" stroke-width="2.9" stroke-linecap="round" stroke-linejoin="round"/></svg>
<div class="t" style="left:61.6px;top:879.2px;font-size:24px;font-weight:normal;color:#0f1114;-webkit-text-stroke:0.3px #0f1114;">Email</div>
<div class="t" style="left:748.0px;top:879.2px;width:0;font-size:24px;font-weight:normal;color:#16181b;-webkit-text-stroke:0.3px #16181b;"><span style="position:absolute;left:0;transform:translateX(-50%)">5<span style="letter-spacing:0.3px">,</span><span style="letter-spacing:-2.6px">1</span>72</span></div>
<div class="t" style="left:1098.0px;top:879.2px;width:0;font-size:24px;font-weight:normal;color:#16181b;-webkit-text-stroke:0.3px #16181b;"><span style="position:absolute;left:0;transform:translateX(-50%)">27</span></div>
<div class="t" style="left:1428.7px;top:879.2px;width:0;font-size:24px;font-weight:normal;color:#3b984b;letter-spacing:0.3px;-webkit-text-stroke:0.3px #3b984b;"><span style="position:absolute;left:0;transform:translateX(-50%)">$<span style="letter-spacing:-2.6px">1</span>350</span></div>
<div class="t" style="left:1582.5px;top:879.2px;font-size:24px;font-weight:normal;color:#0f1114;-webkit-text-stroke:0.3px #0f1114;"><span style="letter-spacing:-2.6px">1</span>6</div>
<div class="t" style="left:1934.0px;top:879.2px;width:0;font-size:24px;font-weight:normal;color:#0f1114;-webkit-text-stroke:0.3px #0f1114;"><span style="position:absolute;right:0">(0.5%)</span></div>
<div class="t" style="left:2093.0px;top:880.2px;width:0;font-size:22.5px;font-weight:normal;color:#0f1114;-webkit-text-stroke:0.80px #0f1114;letter-spacing:-0.07px;"><span style="position:absolute;left:0;transform:translateX(-50%)">0.31%</span></div>
<div class="t" style="left:2364.5px;top:879.2px;width:0;font-size:24px;font-weight:normal;color:#3b984b;letter-spacing:0.3px;-webkit-text-stroke:0.3px #3b984b;"><span style="position:absolute;left:0;transform:translateX(-50%)">$800</span></div>
<svg class="a" style="left:22.5px;top:958.8px" width="16" height="22" viewBox="0 0 16 22"><polyline points="3.5,2.5 11.5,11 3.5,19.5" fill="none" stroke="#ab58cc" stroke-width="2.9" stroke-linecap="round" stroke-linejoin="round"/></svg>
<div class="t" style="left:61.6px;top:957.8px;font-size:24px;font-weight:normal;color:#0f1114;-webkit-text-stroke:0.3px #0f1114;">Organic AI Search</div>
<div class="t" style="left:748.0px;top:957.8px;width:0;font-size:24px;font-weight:normal;color:#16181b;-webkit-text-stroke:0.3px #16181b;"><span style="position:absolute;left:0;transform:translateX(-50%)">4<span style="letter-spacing:0.3px">,</span>690</span></div>
<div class="t" style="left:1098.0px;top:957.8px;width:0;font-size:24px;font-weight:normal;color:#16181b;-webkit-text-stroke:0.3px #16181b;"><span style="position:absolute;left:0;transform:translateX(-50%)">89</span></div>
<div class="t" style="left:1428.7px;top:957.8px;width:0;font-size:24px;font-weight:normal;color:#3b984b;letter-spacing:0.3px;-webkit-text-stroke:0.3px #3b984b;"><span style="position:absolute;left:0;transform:translateX(-50%)">$4450</span></div>
<div class="t" style="left:1582.5px;top:957.8px;font-size:24px;font-weight:normal;color:#0f1114;-webkit-text-stroke:0.3px #0f1114;">85</div>
<div class="t" style="left:1934.0px;top:957.8px;width:0;font-size:24px;font-weight:normal;color:#0f1114;-webkit-text-stroke:0.3px #0f1114;"><span style="position:absolute;right:0">(2.67%)</span></div>
<div class="t" style="left:2093.0px;top:958.8px;width:0;font-size:22.5px;font-weight:normal;color:#0f1114;-webkit-text-stroke:0.80px #0f1114;letter-spacing:-0.07px;"><span style="position:absolute;left:0;transform:translateX(-50%)">1.81%</span></div>
<div class="t" style="left:2364.5px;top:957.8px;width:0;font-size:24px;font-weight:normal;color:#3b984b;letter-spacing:0.3px;-webkit-text-stroke:0.3px #3b984b;"><span style="position:absolute;left:0;transform:translateX(-50%)">$4250</span></div>
<div class="a" style="left:2391px;top:0;width:8px;height:1010px;background:linear-gradient(to right,rgba(0,0,0,0),rgba(0,0,0,.07));z-index:3"></div>
</div>
</body></html>
